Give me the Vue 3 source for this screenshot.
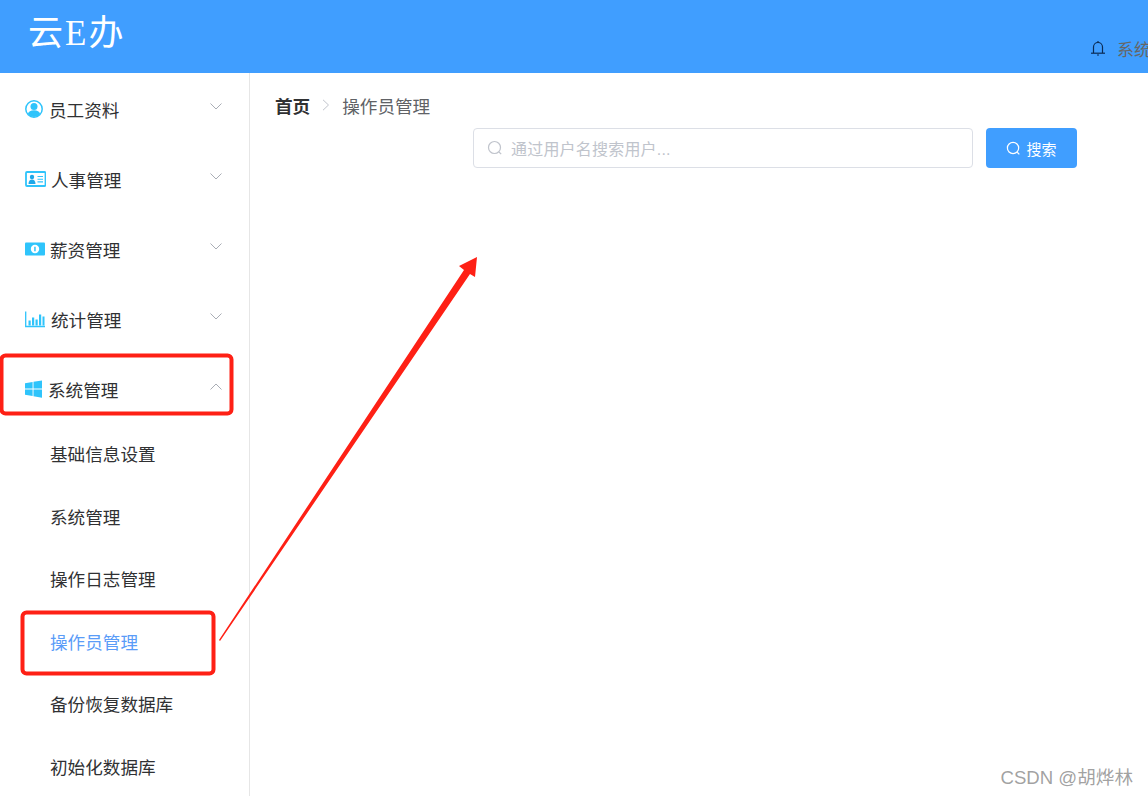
<template>
  <div class="page">
    <!-- Header -->
    <header class="header">
      <div class="logo">云E办</div>
      <div class="user-info">
        <svg class="bell" viewBox="0 0 16 18" width="16" height="18">
          <path d="M3.500 14V8a4.500 4.500 0 0 1 9 0v6" fill="none" stroke="#0b2b55" stroke-width="1.200" />
          <path d="M1 14.200h14" stroke="#0b2b55" stroke-width="1.200" />
          <path d="M8 2v1.400M7 16h2" stroke="#0b2b55" stroke-width="1.200" />
        </svg>
        <span class="user-name">系统管理员</span>
      </div>
    </header>

    <div class="body">
      <!-- Sidebar -->
      <aside class="sidebar">
        <div v-for="menu in menus" :key="menu.title" class="menu-title">
          <svg class="menu-icon" :style="{ marginRight: menu.gap + 'px' }" :viewBox="`0 0 ${menu.w} 20`" :width="menu.w" height="20">
            <template v-if="menu.icon === 'user'">
              <circle cx="9" cy="10" r="8.200" fill="#fff" stroke="#2fc4fb" stroke-width="1.500" />
              <circle cx="9" cy="7.600" r="3.500" fill="#2fc4fb" />
              <path d="M2.800 15a6.400 5 0 0 1 12.400 0 8 8 0 0 1-12.400 0z" fill="#2fc4fb" />
            </template>
            <template v-else-if="menu.icon === 'card'">
              <rect x="1" y="3" width="19.500" height="14" rx="1" fill="#fff" stroke="#2fc4fb" stroke-width="1.800" />
              <circle cx="7" cy="8" r="2.200" fill="#1fa8e8" />
              <path d="M3.500 15c0-3 1.600-4.400 3.500-4.400s3.500 1.400 3.500 4.400z" fill="#1fa8e8" />
              <path d="M12.500 7.500h5.500M12.500 10.200h5.500M12.500 12.900h5.500" stroke="#2fc4fb" stroke-width="1.100" />
            </template>
            <template v-else-if="menu.icon === 'money'">
              <rect x="0" y="3.500" width="20" height="13" rx="1" fill="#2fc4fb" />
              <circle cx="10" cy="10" r="4.200" fill="#fff" />
              <path d="M9.200 7.800h1.500v4.400H9.200z" fill="#2fc4fb" />
            </template>
            <template v-else-if="menu.icon === 'chart'">
              <path d="M0.700 2.500v15h19.500" fill="none" stroke="#2fc4fb" stroke-width="1.300" />
              <path d="M3.500 11.500h2.200v5H3.500zM7 8.500h2.200v8H7zM10.500 10.500h2.200v6h-2.200zM14 5.500h2.200v11H14zM17.500 7.500h2v9h-2z" fill="#2fc4fb" />
            </template>
            <template v-else>
              <path d="M0 4.300 7.600 3v6.500H0zM8.500 2.800 17 1.400v8.100H8.500zM0 10.500h7.600v6.600L0 15.800zM8.500 10.500H17v8.200L8.500 17.300z" fill="#2fc4fb" />
            </template>
          </svg>
          <span>{{ menu.title }}</span>
          <svg class="arrow" viewBox="0 0 12 7" width="12" height="7">
            <path :d="menu.open ? 'M.5 6.500 6 1l5.500 5.500' : 'M.5.500 6 6 11.500.500'" fill="none" stroke="#a9adb5" stroke-width="1" />
          </svg>
        </div>
        <div class="submenu">
          <div v-for="item in subItems" :key="item" class="sub-item" :class="{ active: item === '操作员管理' }">{{ item }}</div>
        </div>
      </aside>

      <!-- Main -->
      <main class="main">
        <div class="breadcrumb">
          <span class="crumb-home">首页</span>
          <svg class="crumb-sep" viewBox="0 0 8 12" width="8" height="12">
            <path d="M1 .8 6.500 6 1 11.200" fill="none" stroke="#c0c4cc" stroke-width="1" />
          </svg>
          <span class="crumb-current">操作员管理</span>
        </div>
        <div class="search-row">
          <div class="search-input">
            <svg viewBox="0 0 16 16" width="16" height="16">
              <circle cx="7.500" cy="7.500" r="6" fill="none" stroke="#c0c4cc" stroke-width="1.200" />
              <path d="m12 12 2.200 2.200" stroke="#c0c4cc" stroke-width="1.200" />
            </svg>
            <span>通过用户名搜索用户...</span>
          </div>
          <button class="search-btn">
            <svg viewBox="0 0 16 16" width="15" height="15">
              <circle cx="7.500" cy="7.500" r="6" fill="none" stroke="#fff" stroke-width="1.300" />
              <path d="m12 12 2.200 2.200" stroke="#fff" stroke-width="1.300" />
            </svg>
            <span>搜索</span>
          </button>
        </div>
      </main>
    </div>

    <!-- Red annotations drawn over the page -->
    <svg class="marks" viewBox="0 0 1148 796" width="1148" height="796">
      <rect x="1.500" y="355.500" width="230" height="58" rx="4" fill="none" stroke="#fe2015" stroke-width="4" />
      <rect x="22.500" y="612.500" width="191" height="61" rx="4" fill="none" stroke="#fe2015" stroke-width="4" />
      <polygon points="219,640 464,270 459,266 477,257 475,277 470,274 220,641" fill="#fe2015" />
    </svg>

    <div class="watermark">CSDN @胡烨林</div>
  </div>
</template>

<script setup>
const menus = [
  { title: "员工资料", icon: "user", w: 18, gap: 6 },
  { title: "人事管理", icon: "card", w: 21, gap: 5 },
  { title: "薪资管理", icon: "money", w: 20, gap: 5 },
  { title: "统计管理", icon: "chart", w: 20, gap: 6 },
  { title: "系统管理", icon: "windows", w: 17, gap: 6, open: true },
];

const subItems = ["基础信息设置", "系统管理", "操作日志管理", "操作员管理", "备份恢复数据库", "初始化数据库"];
</script>

<style>
html,
body {
  overflow: hidden;
  background: #fff;
}
</style>

<style scoped>
.page {
  position: relative;
  width: 1148px;
  height: 796px;
  overflow: hidden;
  font-family: "Liberation Sans", "Noto Sans CJK SC", sans-serif;
}

/* Header */
.header {
  height: 73px;
  background: #409eff;
  display: flex;
  justify-content: space-between;
  overflow: hidden;
}
.logo {
  padding: 14px 0 0 28px;
  font-family: "Liberation Serif", "Noto Sans CJK SC", serif;
  font-size: 35px;
  letter-spacing: 2px;
  line-height: 40px;
  color: #fff;
}
.user-info {
  display: flex;
  align-items: center;
  flex-shrink: 0;
  width: 58px;
  height: 24px;
  margin-top: 36px;
  white-space: nowrap;
}
.bell {
  margin-right: 11px;
  flex-shrink: 0;
}
.user-name {
  font-size: 17px;
  color: #666;
}

/* Sidebar */
.body {
  display: flex;
  height: 723px;
}
.sidebar {
  width: 250px;
  box-sizing: border-box;
  border-right: 1px solid #e6e6e6;
  padding-top: 1px;
  flex-shrink: 0;
}
.menu-title {
  height: 70px;
  display: flex;
  align-items: center;
  padding-left: 25px;
  position: relative;
  font-size: 17.6px;
  color: #303133;
}
.menu-icon {
  flex-shrink: 0;
}
.arrow {
  position: absolute;
  right: 27px;
  top: 29px;
}
.sub-item {
  height: 62.6px;
  line-height: 62.6px;
  padding-left: 50px;
  font-size: 17.6px;
  color: #303133;
}
.sub-item.active {
  color: #5a9cf8;
}

/* Main */
.main {
  flex: 1;
  padding: 18px 0 0 25px;
}
.breadcrumb {
  display: flex;
  align-items: center;
  height: 28px;
  font-size: 17.6px;
}
.crumb-home {
  font-weight: 700;
  color: #303133;
}
.crumb-sep {
  margin: 0 12px 0 12px;
}
.crumb-current {
  color: #606266;
}
.search-row {
  display: flex;
  margin: 9px 0 0 198px;
  gap: 13px;
}
.search-input {
  width: 500px;
  height: 40px;
  box-sizing: border-box;
  border: 1px solid #dcdfe6;
  border-radius: 4px;
  display: flex;
  align-items: center;
  gap: 8px;
  padding-left: 13px;
  font-size: 16px;
  letter-spacing: 0.2px;
  color: #c0c4cc;
}
.search-btn {
  width: 91px;
  height: 40px;
  border: none;
  border-radius: 4px;
  background: #409eff;
  color: #fff;
  font-family: inherit;
  font-size: 15px;
  display: flex;
  align-items: center;
  justify-content: center;
  gap: 5px;
  padding: 0;
}

/* Annotations */
.marks {
  position: absolute;
  left: 0;
  top: 0;
  pointer-events: none;
}
.watermark {
  position: absolute;
  right: 15px;
  top: 765px;
  font-size: 18.6px;
  line-height: 26px;
  color: rgba(120, 120, 120, 0.7);
}
</style>
